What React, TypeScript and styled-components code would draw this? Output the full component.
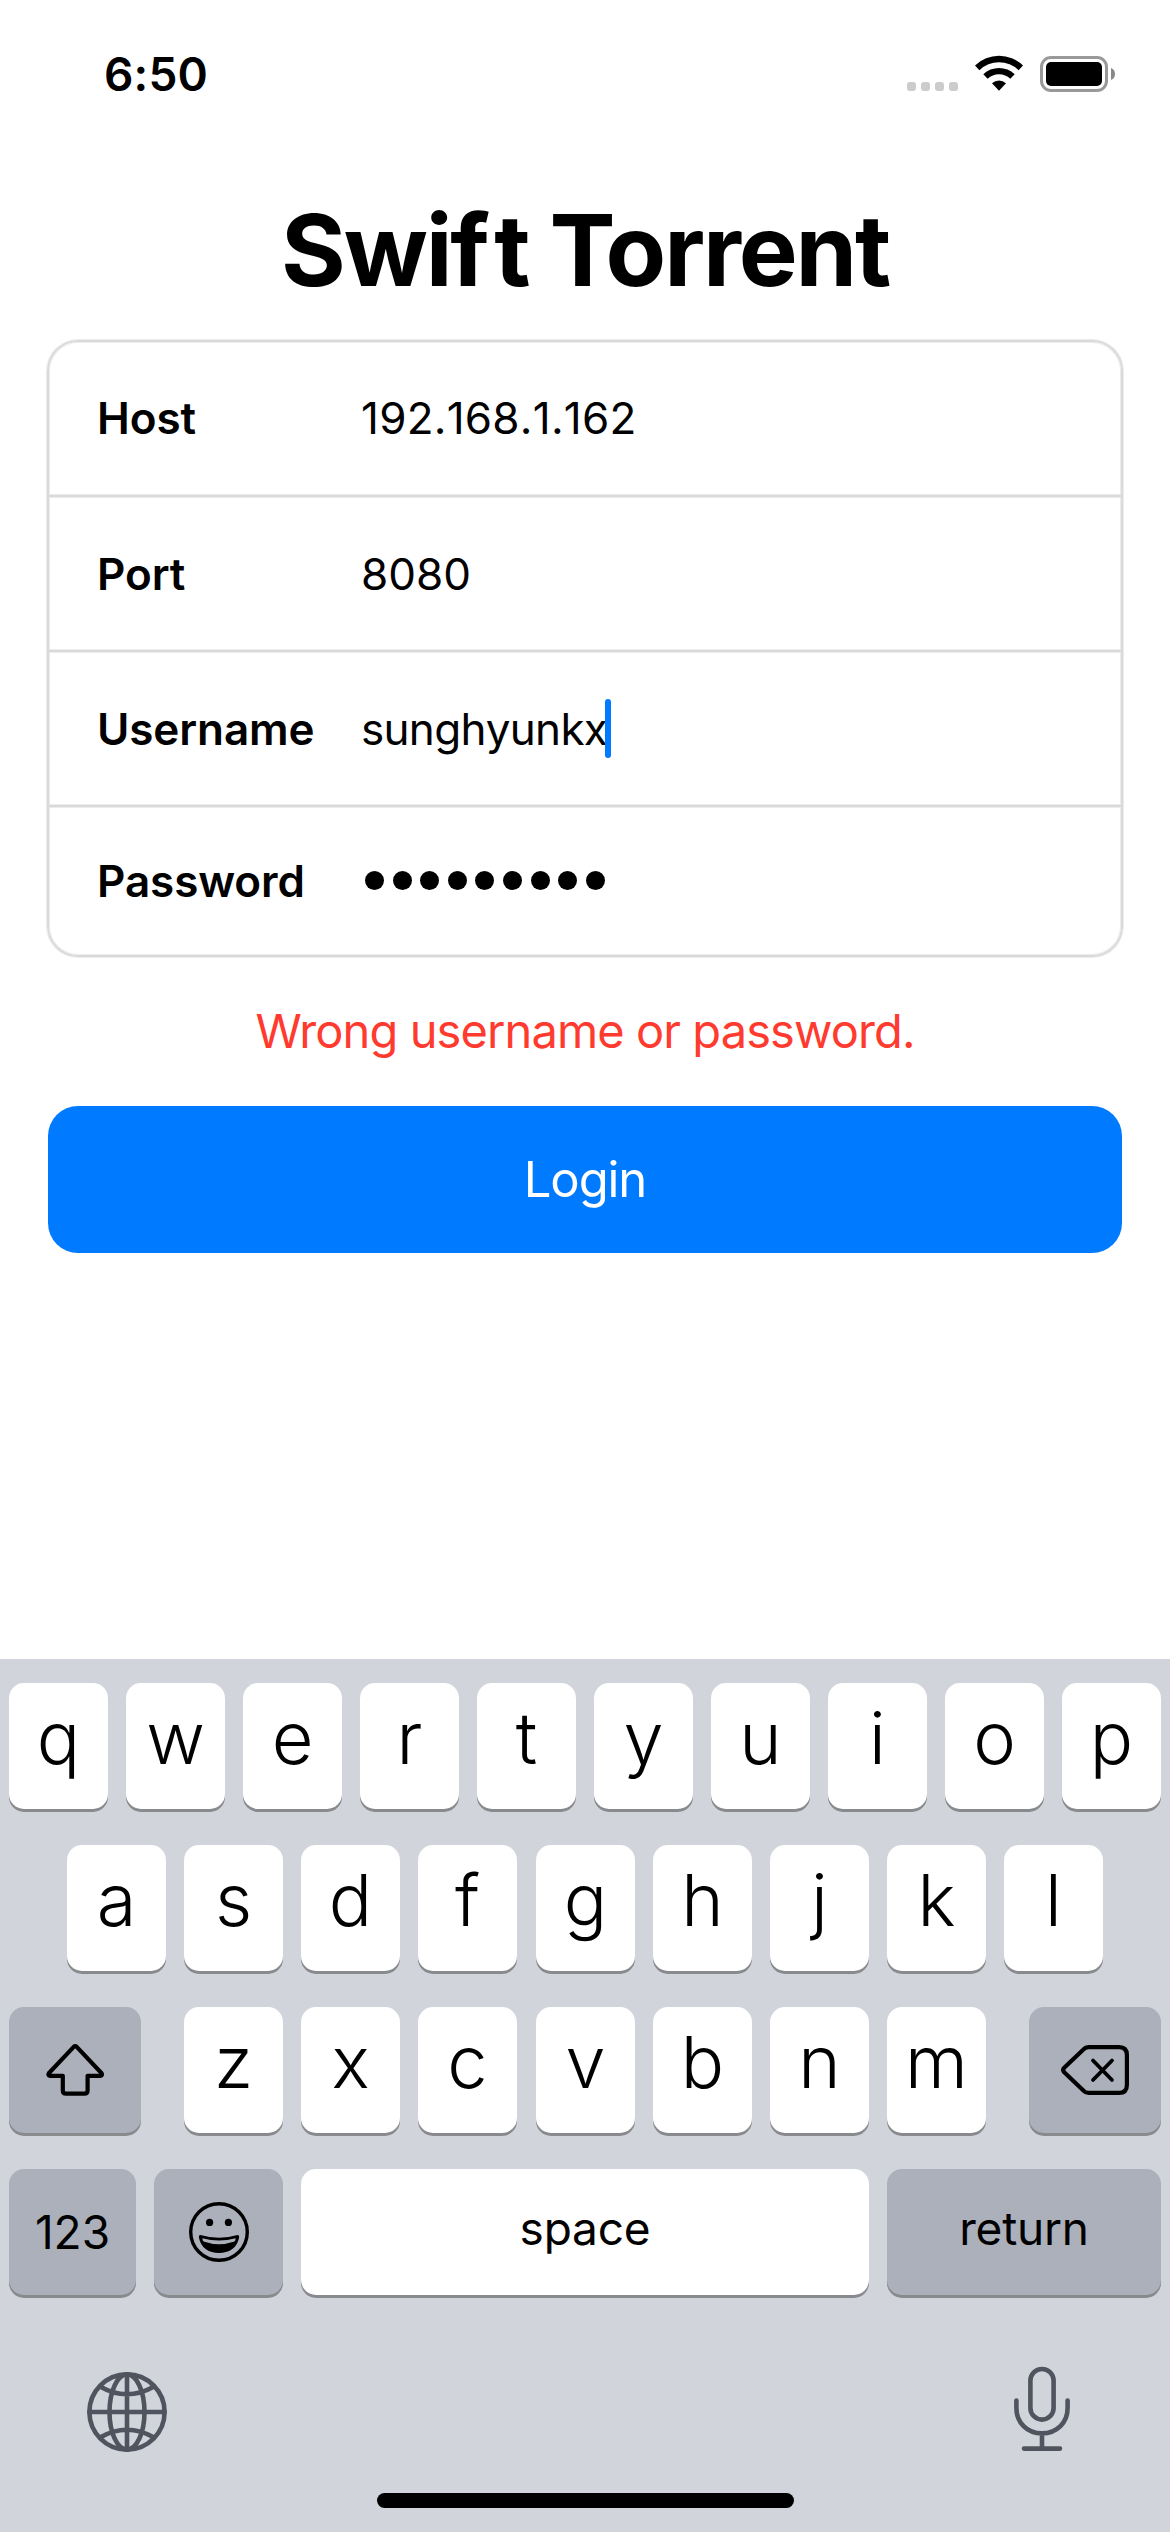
import React from "react";
import styled, { createGlobalStyle } from "styled-components";

const GlobalStyle = createGlobalStyle`
  *, *::before, *::after { box-sizing: border-box; }
  body {
    margin: 0;
    background: #fff;
    color: #000;
    font-family: Inter, Roboto, "Liberation Sans", sans-serif;
  }
`;

const Screen = styled.main`
  display: flex;
  flex-direction: column;
  width: 1170px;
  height: 2532px;
  overflow: hidden;
  background: #fff;
`;

/* Status bar */
const StatusBar = styled.header`
  display: flex;
  align-items: center;
  justify-content: space-between;
  height: 148px;
  padding: 0 55px 0 104px;
`;

const Clock = styled.time`
  font-size: 46px;
  font-weight: 600;
  letter-spacing: 0.2px;
`;

const StatusIcons = styled.div`
  display: flex;
  align-items: center;
`;

const CellularDots = styled.div`
  display: flex;
  gap: 5px;
  margin: 25px 17px 0 0;
`;

const CellularDot = styled.span`
  width: 9px;
  height: 9px;
  border-radius: 3px;
  background: #ccc;
`;

const WifiIcon = styled.svg`
  display: block;
  width: 48px;
  height: 36px;
  margin: 0 17px 2px 0;
`;

const BatteryIcon = styled.svg`
  display: block;
  width: 75px;
  height: 36px;
`;

/* Login form */
const Title = styled.h1`
  margin: 42px 0 30px;
  font-size: 99px;
  line-height: 120px;
  font-weight: 700;
  letter-spacing: -2.2px;
  font-variant-ligatures: none;
  text-align: center;
  white-space: nowrap;
`;

const LooseLetter = styled.span`
  letter-spacing: 4.5px;
`;

const LoginForm = styled.form`
  display: flex;
  flex-direction: column;
  padding: 0 47px;
`;

const FieldGroup = styled.div`
  border: 2px solid #dadada;
  border-radius: 31px;
  box-shadow: 0 0 0 1px #ececec, inset 0 0 0 1px #ececec;
`;

const FieldRow = styled.label<{ $height: number; $last?: boolean }>`
  display: flex;
  align-items: center;
  height: ${(p) => p.$height}px;
  padding: 0 0 ${(p) => (p.$last ? 2 : 4)}px 48px;
  background: ${(p) =>
    p.$last
      ? "none"
      : "linear-gradient(#ececec 1px, #dadada 1px 3px, #ececec 3px) bottom / 100% 4px no-repeat"};
`;

const FieldLabel = styled.span`
  width: 264px;
  font-size: 44px;
  line-height: 54px;
  font-weight: 600;
  letter-spacing: -0.1px;
`;

const FieldValue = styled.span<{ $tracking?: number }>`
  display: flex;
  align-items: center;
  font-size: 44px;
  line-height: 54px;
  font-kerning: none;
  font-variant-ligatures: none;
  letter-spacing: ${(p) => p.$tracking ?? 0}px;
`;

const Caret = styled.span`
  width: 6px;
  height: 59px;
  margin-left: -2px;
  border-radius: 3px;
  background: #007aff;
`;

const SecureDots = styled.span`
  display: flex;
  gap: 8.6px;
  padding-left: 4px;
`;

const SecureDot = styled.span`
  width: 19px;
  height: 19px;
  border-radius: 50%;
  background: #000;
`;

const ErrorText = styled.p`
  margin: 44px 0 45px;
  font-size: 47px;
  line-height: 60px;
  letter-spacing: -0.9px;
  color: #ff3b30;
  text-align: center;
`;

const LoginButton = styled.button`
  height: 147px;
  margin: 0 1px;
  padding: 0;
  border: none;
  border-radius: 30px;
  background: #007aff;
  color: #fff;
  font: 400 49px/60px Inter, Roboto, sans-serif;
  letter-spacing: -1.1px;
`;

/* Keyboard */
const Keyboard = styled.section`
  display: flex;
  flex-direction: column;
  height: 873px;
  margin-top: auto;
  padding: 24px 9px;
  background: #d1d4db;
`;

const KeyRow = styled.div<{ $inset?: number }>`
  display: flex;
  gap: 18px;
  margin-bottom: 36px;
  padding: 0 ${(p) => p.$inset ?? 0}px;
`;

const Key = styled.button<{ $w?: number; $special?: boolean; $ml?: number; $kind?: "letter" | "word" | "digits" }>`
  display: flex;
  align-items: center;
  justify-content: center;
  flex: none;
  width: ${(p) => p.$w ?? 99}px;
  height: 126px;
  margin: 0 0 0 ${(p) => p.$ml ?? 0}px;
  padding: 0 0 ${(p) => (p.$kind === "letter" ? 17 : p.$kind === "word" ? 8 : 0)}px;
  border: none;
  border-radius: 15px;
  background: ${(p) => (p.$special ? "#abb0bb" : "#fff")};
  box-shadow: 0 3px 0 #898a8d;
  color: #000;
  font-family: Inter, Roboto, sans-serif;
  font-size: ${(p) => (p.$kind === "letter" ? 72 : 46)}px;
  font-weight: ${(p) => (p.$kind === "letter" ? 350 : 400)};
  line-height: 1;
  letter-spacing: ${(p) => (p.$kind === "word" ? -0.2 : 0)}px;
`;

const KeyIcon = styled.svg`
  display: block;
  overflow: visible;
  fill: none;
  stroke: #000;
  stroke-linecap: round;
  stroke-linejoin: round;
`;

const KeyboardDock = styled.div`
  display: flex;
  justify-content: space-between;
  padding: 35px 91px 0 78px;
`;

const DockIcon = styled.svg`
  display: block;
  fill: none;
  stroke: #50545e;
  stroke-width: 4.6;
  stroke-linecap: round;
`;

const HomeIndicator = styled.div`
  width: 417px;
  height: 15px;
  margin: auto auto 0;
  border-radius: 8px;
  background: #000;
`;

const LetterKeys = ({ letters, offsets = {} }: { letters: string; offsets?: Record<string, number> }) => (
  <>
    {letters.split("").map((c) => (
      <Key key={c} type="button" $kind="letter" $ml={offsets[c]}>
        {c}
      </Key>
    ))}
  </>
);

const fields = [
  { label: "Host", value: "192.168.1.162", height: 156, tracking: 0.25 },
  { label: "Port", value: "8080", height: 155, tracking: 0 },
  { label: "Username", value: "sunghyunkx", height: 155, tracking: -0.7, focused: true },
];

export default function App() {
  return (
    <>
      <GlobalStyle />
      <Screen>
        <StatusBar>
          <Clock>6:50</Clock>
          <StatusIcons>
            <CellularDots>
              {[0, 1, 2, 3].map((i) => (
                <CellularDot key={i} />
              ))}
            </CellularDots>
            <WifiIcon viewBox="0 0 48 36">
              <path d="M0 10.5 A34.5 34.5 0 0 1 48 10.5 L43.6 15.2 A28 28 0 0 0 4.4 15.2 Z" />
              <path d="M8.3 19.3 A22.6 22.6 0 0 1 39.7 19.3 L35.3 23.8 A16.2 16.2 0 0 0 12.7 23.8 Z" />
              <path d="M17 28.2 A10.6 10.6 0 0 1 31 28.2 L24 35.8 Z" />
            </WifiIcon>
            <BatteryIcon viewBox="0 0 75 36">
              <rect x="1.5" y="1.5" width="65" height="33" rx="9.5" fill="none" stroke="#999" strokeWidth="3" />
              <rect x="6" y="6" width="56" height="24" rx="5" />
              <path d="M71 12 A6.5 6.5 0 0 1 71 24 Z" fill="#888" />
            </BatteryIcon>
          </StatusIcons>
        </StatusBar>

        <Title>
          Swi<LooseLetter>f</LooseLetter>t Torrent
        </Title>
        <LoginForm>
          <FieldGroup>
            {fields.map((f) => (
              <FieldRow key={f.label} $height={f.height}>
                <FieldLabel>{f.label}</FieldLabel>
                <FieldValue $tracking={f.tracking}>
                  {f.value}
                  {f.focused && <Caret />}
                </FieldValue>
              </FieldRow>
            ))}
            <FieldRow $height={147} $last>
              <FieldLabel>Password</FieldLabel>
              <SecureDots>
                {Array.from({ length: 9 }, (_, i) => (
                  <SecureDot key={i} />
                ))}
              </SecureDots>
            </FieldRow>
          </FieldGroup>
          <ErrorText>Wrong username or password.</ErrorText>
          <LoginButton type="button">Login</LoginButton>
        </LoginForm>

        <Keyboard>
          <KeyRow>
            <LetterKeys letters="qwertyuiop" />
          </KeyRow>
          <KeyRow $inset={58}>
            <LetterKeys letters="asdfghjkl" offsets={{ g: 1 }} />
          </KeyRow>
          <KeyRow>
            <Key type="button" $special $w={132} aria-label="shift">
              <KeyIcon width="58" height="52" viewBox="0 0 58 52" strokeWidth="4.2">
                <path d="M27.7 2.9 L2.8 29.3 Q1.6 31.6 4 31.8 H16.8 V46.4 Q16.8 49.6 20 49.6 H38.4 Q41.6 49.6 41.6 46.4 V31.8 H54.4 Q56.8 31.6 55.6 29.3 L30.7 2.9 Q29.2 1.5 27.7 2.9 Z" />
              </KeyIcon>
            </Key>
            <LetterKeys letters="zxcvbnm" offsets={{ z: 25, v: 1 }} />
            <Key type="button" $special $w={132} $ml={25} aria-label="delete">
              <KeyIcon width="68" height="50" viewBox="0 0 68 50" strokeWidth="4.2">
                <path d="M27.5 2.1 H58 Q65.9 2.1 65.9 10 V40 Q65.9 47.9 58 47.9 H27.5 Q24.5 47.9 22.4 45.6 L3.2 27.3 Q1.1 25 3.2 22.7 L22.4 4.4 Q24.5 2.1 27.5 2.1 Z" />
                <path d="M32 15.5 L51 35 M51 15.5 L32 35" strokeWidth="3.8" />
              </KeyIcon>
            </Key>
          </KeyRow>
          <KeyRow>
            <Key type="button" $special $w={127} $kind="digits">
              123
            </Key>
            <Key type="button" $special $w={129} aria-label="emoji">
              <KeyIcon width="60" height="60" viewBox="0 0 60 60" strokeWidth="3.4">
                <circle cx="30" cy="30" r="28.3" />
                <circle cx="20.6" cy="20.4" r="3.6" fill="#000" stroke="none" />
                <circle cx="39.4" cy="20.4" r="3.6" fill="#000" stroke="none" />
                <path d="M11.5 33 Q30 38.6 48.5 33 Q50.6 33 50 36 C48 46 40 51 30 51 C20 51 12 46 10 36 Q9.4 33 11.5 33 Z" fill="#000" stroke="none" />
                <path d="M13.4 36.2 Q30 40.6 46.6 36.2 Q46.8 38 45.4 39.6 Q30 45 14.6 39.6 Q13.2 38 13.4 36.2 Z" fill="#abb0bb" stroke="none" />
              </KeyIcon>
            </Key>
            <Key type="button" $w={568} $kind="word">
              space
            </Key>
            <Key type="button" $special $w={274} $kind="word">
              return
            </Key>
          </KeyRow>
          <KeyboardDock>
            <DockIcon width="80" height="86" viewBox="0 0 80 86">
              <circle cx="40" cy="46" r="37.6" />
              <ellipse cx="40" cy="46" rx="17.5" ry="37.6" />
              <path d="M40 8.4 V83.6 M2.4 46 H77.6 M13 20.5 Q40 36 67 20.5 M13 71.5 Q40 56 67 71.5" />
            </DockIcon>
            <DockIcon width="56" height="86" viewBox="0 0 56 86">
              <rect x="16.4" y="3" width="23.2" height="50.6" rx="11.6" />
              <path d="M2.4 34.5 V42 C2.4 56.5 13 67.4 28 67.4 C43 67.4 53.6 56.5 53.6 42 V34.5 M28 67.4 V82 M10 82.6 H46" />
            </DockIcon>
          </KeyboardDock>
          <HomeIndicator />
        </Keyboard>
      </Screen>
    </>
  );
}
